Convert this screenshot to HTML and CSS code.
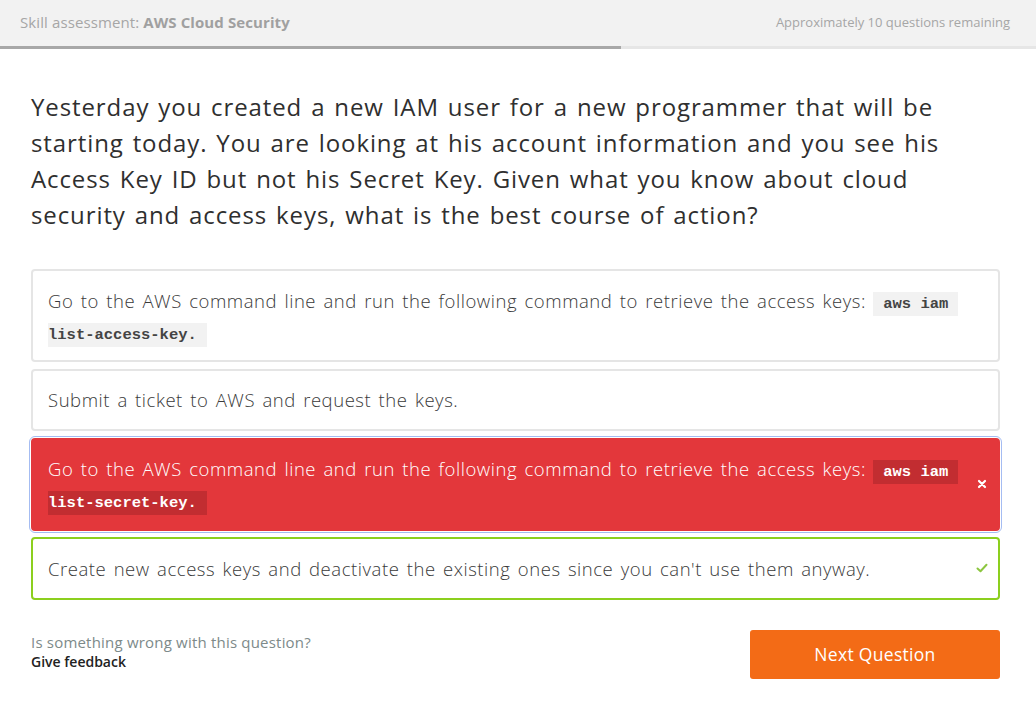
FILE: index.html
```html
<!DOCTYPE html>
<html lang="en">
<head>
<meta charset="utf-8">
<title>Skill assessment: AWS Cloud Security</title>
<link rel="stylesheet" href="styles.css">
</head>
<body>
<header class="topbar">
  <div class="title">Skill assessment: <strong>AWS Cloud Security</strong></div>
  <div class="remaining">Approximately 10 questions remaining</div>
</header>
<div class="progress"><div class="progress-fill" style="width:59.9%"></div></div>
<main class="content">
  <h1 class="question">Yesterday you created a new IAM user for a new programmer that will be starting today. You are looking at his account information and you see his Access Key ID but not his Secret Key. Given what you know about cloud security and access keys, what is the best course of action?</h1>
  <ul class="options">
    <li class="option">
      <span class="option-text">Go to the AWS command line and run the following command to retrieve the access keys: <code class="code"><span class="nw">aws iam&nbsp;</span><wbr><span class="nw">list-access-key.</span></code></span>
    </li>
    <li class="option">
      <span class="option-text">Submit a ticket to AWS and request the keys.</span>
    </li>
    <li class="option wrong">
      <span class="option-text">Go to the AWS command line and run the following command to retrieve the access keys: <code class="code"><span class="nw">aws iam&nbsp;</span><wbr><span class="nw">list-secret-key.</span></code></span>
      <span class="icon"><svg width="10" height="10" viewBox="0 0 10 10"><path d="M2 2 L8 8 M8 2 L2 8" stroke="#fff" stroke-width="2.2" stroke-linecap="round"/></svg></span>
    </li>
    <li class="option correct">
      <span class="option-text">Create new access keys and deactivate the existing ones since you can't use them anyway.</span>
      <span class="icon"><svg width="12" height="10" viewBox="0 0 12 10"><path d="M1.5 5.5 L4.5 8.2 L10.5 1.8" fill="none" stroke="#8cc63f" stroke-width="2" stroke-linecap="round" stroke-linejoin="round"/></svg></span>
    </li>
  </ul>
  <footer class="footer">
    <div class="feedback">
      <div class="feedback-q">Is something wrong with this question?</div>
      <a class="feedback-link" href="#">Give feedback</a>
    </div>
    <button class="next">Next Question</button>
  </footer>
</main>
</body>
</html>
```

FILE: styles.css
```css
* { box-sizing: border-box; }
html, body { margin: 0; padding: 0; background: #fff; }
body { font-family: "Open Sans", "Liberation Sans", sans-serif; color: #333; }

.topbar {
  height: 46px;
  background: #f2f2f2;
  display: flex;
  align-items: center;
  justify-content: space-between;
  padding: 0 26px 3px 20px;
}
.title { font-size: 15px; letter-spacing: 0.1px; color: #a6a6a6; }
.title strong { font-weight: 700; color: #a0a0a0; }
.remaining { font-size: 13px; color: #a6a6a6; }

.progress { height: 3px; background: #e6e6e6; }
.progress-fill { height: 100%; background: #a8a8a8; }

.content { padding: 0 36px 0 31px; }

.question {
  margin: 40px 0 36px;
  font-size: 24px;
  line-height: 36px;
  font-weight: 400;
  letter-spacing: 0.9px;
  word-spacing: 1.8px;
  color: #2f2f2f;
}

.options {
  list-style: none;
  margin: 0;
  padding: 0;
  display: flex;
  flex-direction: column;
  gap: 6.5px;
}
.option {
  display: flex;
  align-items: center;
  min-height: 62.5px;
  border: 2px solid #e5e5e5;
  border-radius: 4px;
  padding: 13.5px 10px 13.5px 15px;
  font-size: 18.5px;
  line-height: 31px;
  font-weight: 300;
  letter-spacing: 0.55px;
  word-spacing: 2px;
  color: #3a3a3a;
}
.option-text { flex: 1; padding-right: 16px; }
.icon { width: 12px; display: flex; justify-content: center; flex-shrink: 0; }

.code {
  font-family: "Liberation Mono", "Courier New", monospace;
  font-weight: 700;
  font-size: 15.5px;
  line-height: 1;
  letter-spacing: 0;
  word-spacing: 0;
  background: #f2f2f2;
  color: #444;
  padding: 3px 10px;
}
.nw { white-space: nowrap; }

.option.wrong {
  background: #e3373b;
  border-color: #e3373b;
  color: #fff;
  outline: 1px solid #a4bcf2;
  outline-offset: 1px;
}
.option.wrong .code { background: #c22d31; color: #fff; }
.option.correct { border-color: #8ccf1e; }

.footer {
  margin-top: 30px;
  display: flex;
  align-items: center;
  justify-content: space-between;
}
.feedback { margin-bottom: 5px; }
.feedback-q { font-size: 15px; letter-spacing: 0.2px; line-height: 19px; color: #7d8a8a; }
.feedback-link {
  display: block;
  font-size: 14px;
  line-height: 19px;
  font-weight: 600;
  color: #222;
  text-decoration: none;
}
.next {
  width: 250px;
  height: 49px;
  border: none;
  border-radius: 3px;
  background: #f36b16;
  color: #fff;
  font-family: "Open Sans", "Liberation Sans", sans-serif;
  font-size: 17.5px;
  letter-spacing: 0.3px;
  font-weight: 500;
}
```
